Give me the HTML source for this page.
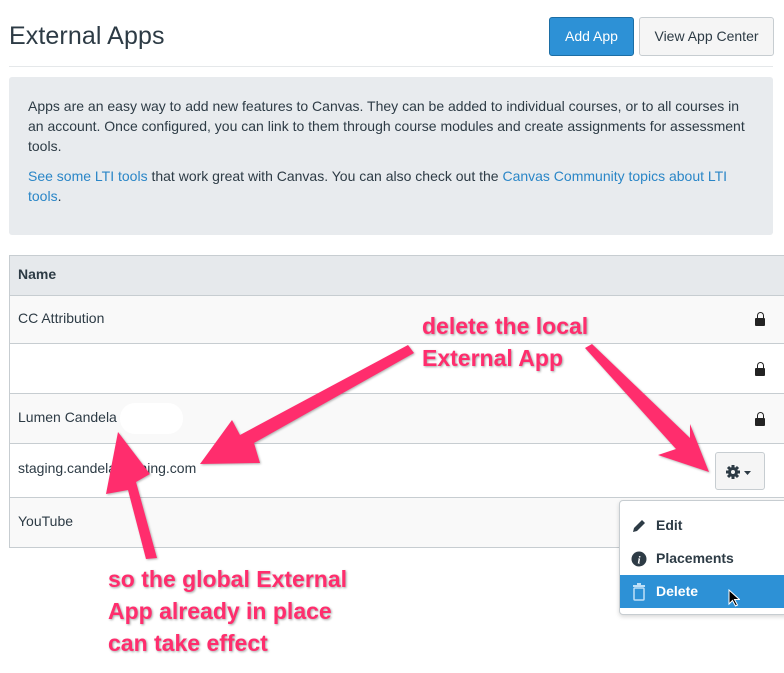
<!DOCTYPE html>
<html><head><style>
*{margin:0;padding:0;box-sizing:border-box}
body{width:784px;height:673px;background:#fff;font-family:"Liberation Sans",sans-serif;color:#2d3b45;position:relative;overflow:hidden}
.abs{position:absolute}
h1{position:absolute;left:9px;top:22px;font-size:25px;font-weight:normal;color:#2d3b45;letter-spacing:0.1px}
.btn{position:absolute;top:17px;height:39px;border-radius:3px;font-size:14px;line-height:37px;text-align:center}
.hr{position:absolute;left:9px;top:66px;width:764px;height:1px;background:#e5e8ea}
.info{position:absolute;left:9px;top:77px;width:764px;height:158px;background:#e8ebee;border-radius:3px;font-size:14px;line-height:20px;padding:19px 19px}
.info a{color:#2a86c7;text-decoration:none}
.tbl{position:absolute;left:9px;top:255px;width:775px;border:1px solid #c7cdd1;border-right:none}
.row{position:relative;border-top:1px solid #c7cdd1;font-size:14px;padding-left:8px}
.lock{position:absolute;right:19px;width:10px;height:8px;background:#222;border-radius:1px}
.lock:before{content:"";position:absolute;left:1.5px;top:-6px;width:7px;height:8px;border:1.5px solid #222;border-bottom:none;border-radius:4px 4px 0 0;box-sizing:border-box}
.ann{position:absolute;color:#ff2d6d;font-weight:bold;font-size:23px;line-height:32px;text-shadow:1px 1px 2px rgba(0,0,0,.35)}
.menu{position:absolute;left:619px;top:500px;width:170px;height:115px;background:#fff;border:1px solid #c7cdd1;border-radius:4px;box-shadow:0 2px 4px rgba(0,0,0,.15)}
.mi{position:absolute;left:0;width:100%;height:33px;font-size:14px;font-weight:bold;line-height:33px;padding-left:36px}
</style></head><body>
<h1>External Apps</h1>
<div class="btn" style="left:549px;width:85px;background:#2d91d6;border:1px solid #1c6ea5;color:#fff">Add App</div>
<div class="btn" style="left:639px;width:135px;background:#f5f5f5;border:1px solid #c7cdd1;color:#2d3b45">View App Center</div>
<div class="hr"></div>
<div class="info">Apps are an easy way to add new features to Canvas. They can be added to individual courses, or to all courses in<br>an account. Once configured, you can link to them through course modules and create assignments for assessment<br>tools.<div style="height:10px"></div><a>See some LTI tools</a> that work great with Canvas. You can also check out the <a>Canvas Community topics about LTI<br>tools</a>.</div>
<div class="tbl">
<div style="height:39px;background:#e6e9ec;font-weight:bold;font-size:14px;line-height:37px;padding-left:8px">Name</div>
<div class="row" style="height:48px;line-height:44px;background:#f9f9f9">CC Attribution<div class="lock" style="top:22px"></div></div>
<div class="row" style="height:50px;background:#fff"><div class="lock" style="top:24px"></div></div>
<div class="row" style="height:50px;line-height:47px;background:#f9f9f9">Lumen Candela<div class="lock" style="top:24px"></div><div class="abs" style="left:110px;top:9px;width:63px;height:31px;background:#fff;border-radius:15px"></div></div>
<div class="row" style="height:54px;line-height:49px;background:#fff">staging.candelalearning.com
<div class="abs" style="left:705px;top:8px;width:50px;height:38px;background:#f5f5f5;border:1px solid #c7cdd1;border-radius:3px">
<svg class="abs" style="left:9px;top:11px" width="30" height="16" viewBox="0 0 30 16"><circle cx="8" cy="8" r="5" fill="#2d3b45"/><g stroke="#2d3b45" stroke-width="3"><line x1="8" y1="1" x2="8" y2="15"/><line x1="1" y1="8" x2="15" y2="8"/><line x1="3" y1="3" x2="13" y2="13"/><line x1="13" y1="3" x2="3" y2="13"/></g><circle cx="8" cy="8" r="2" fill="#f5f5f5"/><path d="M19 7h7l-3.5 4z" fill="#2d3b45"/></svg></div></div>
<div class="row" style="height:50px;line-height:46px;background:#f9f9f9">YouTube</div>
</div>
<div class="menu">
<div class="mi" style="top:8px">Edit</div>
<svg class="abs" style="left:11px;top:17px" width="16" height="16" viewBox="0 0 16 16"><path d="M2 14l1-4 8-8 3 3-8 8z" fill="#2d3b45"/></svg>
<div class="mi" style="top:41px">Placements</div>
<svg class="abs" style="left:11px;top:50px" width="16" height="16" viewBox="0 0 16 16"><circle cx="8" cy="8" r="7.5" fill="#2d3b45"/><text x="8" y="12.5" font-size="11" font-weight="bold" font-style="italic" fill="#fff" text-anchor="middle" font-family="Liberation Serif">i</text></svg>
<div class="mi" style="top:74px;background:#2d91d6;color:#fff">Delete</div>
<svg class="abs" style="left:12px;top:82px" width="14" height="18" viewBox="0 0 14 18"><rect x="1" y="2" width="12" height="2" fill="#bfe0f7"/><rect x="5" y="0" width="4" height="2" fill="#bfe0f7"/><rect x="2" y="5" width="10" height="12" rx="1" fill="none" stroke="#bfe0f7" stroke-width="1.5"/></svg>
<svg class="abs" style="left:108px;top:88px" width="12" height="18" viewBox="0 0 12 18"><path d="M1 1v14l3.5-3.5 3 5.5 2-1-3-5.5h5z" fill="#000" stroke="#fff" stroke-width="1"/></svg>
</div>
<svg class="abs" style="left:0;top:0" width="784" height="673">
<g fill="#ff2d6d" style="filter:drop-shadow(1px 1px 1px rgba(0,0,0,.3))">
<polygon points="408,345 414,353 254,443 260,463 200,464 232,420 240,435"/>
<polygon points="585,348 592,344 690,438 690,424 709,472 658,455 676,449"/>
<polygon points="157,558 146,559 128,490 106,494 118,432 150,474 136,482"/>
</g>
</svg>
<div class="ann" style="left:422px;top:310px">delete the local<br>External App</div>
<div class="ann" style="left:108px;top:563px">so the global External<br>App already in place<br>can take effect</div>
</body></html>
